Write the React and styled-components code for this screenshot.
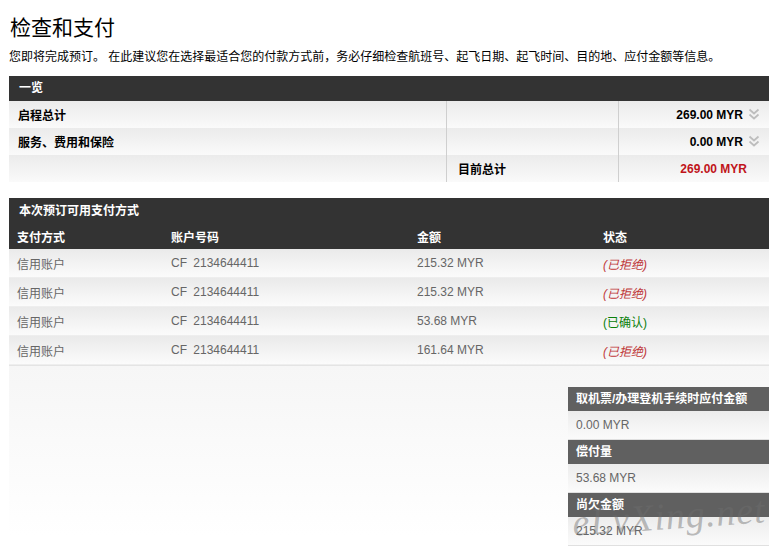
import React from 'react';
import styled, { createGlobalStyle } from 'styled-components';

const FONT = `"Liberation Sans", Arial, "Noto Sans CJK SC", sans-serif`;

const GlobalStyle = createGlobalStyle`
  html, body {
    margin: 0;
    padding: 0;
    background: #fff;
  }
  body {
    font-family: ${FONT};
    font-size: 12px;
    color: #000;
  }
`;

const Page = styled.div`
  position: relative;
  width: 760px;
  padding: 13px 9px 0 9px;
`;

const Title = styled.h1`
  margin: 0 0 0 1px;
  font-size: 21px;
  line-height: 30px;
  font-weight: 400;
`;

const Intro = styled.p`
  margin: 6px 0 11px;
  font-size: 12px;
  line-height: 16px;
`;

const Bar = styled.div`
  background: #333;
  color: #fff;
  font-weight: bold;
  height: ${(p) => p.$h || 25}px;
  line-height: ${(p) => p.$h || 25}px;
  padding-left: 10px;
`;

const SummaryRow = styled.div`
  display: grid;
  grid-template-columns: 437px 172px 1fr;
  height: 27px;
  background: linear-gradient(#ebebeb, #fafafa);
`;

const Cell = styled.div`
  display: flex;
  align-items: center;
  justify-content: ${(p) => (p.$right ? 'flex-end' : 'flex-start')};
  padding: 0 ${(p) => p.$pr ?? 0}px 0 ${(p) => p.$pl ?? 0}px;
  font-weight: bold;
  color: ${(p) => p.$color || '#000'};
  border-left: ${(p) => (p.$line ? '1px solid #cfcfcf' : 'none')};
  gap: 5px;
`;

const Payments = styled.div`
  margin-top: 16px;
`;

const Grid = styled.div`
  display: grid;
  grid-template-columns: 154px 246px 186px 1fr;
  align-items: center;
  padding-left: 8px;
`;

const HeadRow = styled(Grid)`
  background: #333;
  color: #fff;
  font-weight: bold;
  height: 24px;
  padding-bottom: 1px;
`;

const PayRow = styled(Grid)`
  height: 29px;
  color: #666;
  background: linear-gradient(#eaeaea, #fbfbfb);
  border-bottom: 1px solid #eee;
  box-sizing: border-box;
`;

const Account = styled.span`
  word-spacing: 3px;
`;

const Status = styled.span`
  color: ${(p) => (p.$ok ? '#0a800a' : '#c0393b')};
  font-style: ${(p) => (p.$ok ? 'normal' : 'italic')};
`;

const Lower = styled.div`
  display: flex;
  justify-content: flex-end;
  padding-top: 21px;
  border-top: 1px solid #e4e4e4;
  background: linear-gradient(#f6f6f6, #ffffff 170px);
`;

const Boxes = styled.div`
  width: 201px;
  display: flex;
  flex-direction: column;
`;

const BoxHead = styled.div`
  background: #606060;
  color: #fff;
  font-weight: bold;
  height: 24px;
  line-height: 24px;
  padding-left: 8px;
  white-space: nowrap;
`;

const BoxValue = styled.div`
  height: 28px;
  line-height: 28px;
  padding-left: 8px;
  color: #666;
  background: linear-gradient(#ececec, #fbfbfb);
  border-bottom: 1px solid #e0e0e0;
`;

const Watermark = styled.div`
  position: absolute;
  left: 572px;
  top: 494px;
  font-family: "Liberation Serif", serif;
  font-style: italic;
  font-size: 38px;
  color: rgba(110, 110, 110, 0.45);
  letter-spacing: 1px;
  transform: rotate(-4deg);
  pointer-events: none;
`;

const Chevron = () => (
  <svg width="12" height="13" viewBox="0 0 12 13" fill="none" stroke="#bdbdbd" strokeWidth="1.7">
    <path d="M1.5 1.5 6 5.5 10.5 1.5" />
    <path d="M1.5 6.5 6 10.5 10.5 6.5" />
  </svg>
);

const rows = [
  { account: 'CF 2134644411', amount: '215.32 MYR', ok: false },
  { account: 'CF 2134644411', amount: '215.32 MYR', ok: false },
  { account: 'CF 2134644411', amount: '53.68 MYR', ok: true },
  { account: 'CF 2134644411', amount: '161.64 MYR', ok: false },
];

export default function App() {
  return (
    <>
      <GlobalStyle />
      <Page>
        <Title>检查和支付</Title>
        <Intro>
          您即将完成预订。 在此建议您在选择最适合您的付款方式前，务必仔细检查航班号、起飞日期、起飞时间、目的地、应付金额等信息。
        </Intro>

        <Bar>一览</Bar>
        <SummaryRow>
          <Cell $pl={9}>启程总计</Cell>
          <Cell $line />
          <Cell $line $right $pr={9}>
            269.00 MYR <Chevron />
          </Cell>
        </SummaryRow>
        <SummaryRow>
          <Cell $pl={9}>服务、费用和保险</Cell>
          <Cell $line />
          <Cell $line $right $pr={9}>
            0.00 MYR <Chevron />
          </Cell>
        </SummaryRow>
        <SummaryRow>
          <Cell />
          <Cell $line $pl={11}>目前总计</Cell>
          <Cell $line $right $pr={22} $color="#c0141a">
            269.00 MYR
          </Cell>
        </SummaryRow>

        <Payments>
          <Bar $h={26}>本次预订可用支付方式</Bar>
          <HeadRow>
            <span>支付方式</span>
            <span>账户号码</span>
            <span>金额</span>
            <span>状态</span>
          </HeadRow>
          {rows.map((r, i) => (
            <PayRow key={i}>
              <span>信用账户</span>
              <Account>{r.account}</Account>
              <span>{r.amount}</span>
              <Status $ok={r.ok}>{r.ok ? '(已确认)' : '(已拒绝)'}</Status>
            </PayRow>
          ))}
        </Payments>

        <Lower>
          <Boxes>
            <BoxHead>取机票/办理登机手续时应付金额</BoxHead>
            <BoxValue>0.00 MYR</BoxValue>
            <BoxHead>偿付量</BoxHead>
            <BoxValue>53.68 MYR</BoxValue>
            <BoxHead>尚欠金额</BoxHead>
            <BoxValue>215.32 MYR</BoxValue>
          </Boxes>
        </Lower>
        <Watermark>eLvXing.net</Watermark>
      </Page>
    </>
  );
}
